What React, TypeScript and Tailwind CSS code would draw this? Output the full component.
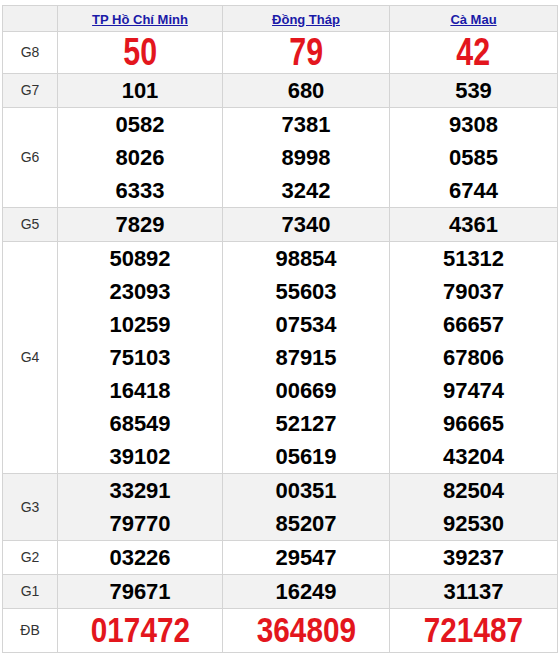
import React from 'react';

type Row = {
  label: string;
  values: string[][];
  shaded?: boolean;
  kind?: 'big' | 'special';
};

const provinces = ['TP Hồ Chí Minh', 'Đồng Tháp', 'Cà Mau'];

const rows: Row[] = [
  { label: 'G8', values: [['50'], ['79'], ['42']], kind: 'big' },
  { label: 'G7', values: [['101'], ['680'], ['539']], shaded: true },
  {
    label: 'G6',
    values: [
      ['0582', '8026', '6333'],
      ['7381', '8998', '3242'],
      ['9308', '0585', '6744'],
    ],
  },
  { label: 'G5', values: [['7829'], ['7340'], ['4361']], shaded: true },
  {
    label: 'G4',
    values: [
      ['50892', '23093', '10259', '75103', '16418', '68549', '39102'],
      ['98854', '55603', '07534', '87915', '00669', '52127', '05619'],
      ['51312', '79037', '66657', '67806', '97474', '96665', '43204'],
    ],
  },
  {
    label: 'G3',
    values: [
      ['33291', '79770'],
      ['00351', '85207'],
      ['82504', '92530'],
    ],
    shaded: true,
  },
  { label: 'G2', values: [['03226'], ['29547'], ['39237']] },
  { label: 'G1', values: [['79671'], ['16249'], ['31137']], shaded: true },
  { label: 'ĐB', values: [['017472'], ['364809'], ['721487']], kind: 'special' },
];

function NumberCell({ nums, kind }: { nums: string[]; kind?: Row['kind'] }) {
  if (kind === 'big') {
    return (
      <div className="h-[41px] flex items-center justify-center">
        <span className="inline-block scale-x-[0.8] text-[38px] font-bold text-[#e3161d]">{nums[0]}</span>
      </div>
    );
  }
  if (kind === 'special') {
    return (
      <div className="h-[43px] flex items-center justify-center">
        <span className="inline-block scale-x-[0.85] text-[35px] font-bold text-[#e3161d]">{nums[0]}</span>
      </div>
    );
  }
  return (
    <div className="flex flex-col items-center">
      {nums.map((n) => (
        <div key={n} className="leading-[33px] text-[22px] font-bold text-black">
          {n}
        </div>
      ))}
    </div>
  );
}

export default function App() {
  return (
    <div className="bg-white w-[560px] h-[653px] pl-[2px] pt-[5px] font-['Liberation_Sans',Arial,sans-serif]">
      <table className="w-[555px] border-collapse table-fixed">
        <colgroup>
          <col className="w-[55px]" />
          <col className="w-[165px]" />
          <col className="w-[167px]" />
          <col className="w-[168px]" />
        </colgroup>
        <thead>
          <tr className="bg-[#f1f1f1] h-[26px]">
            <th className="border border-[#d4d4d4]" />
            {provinces.map((p) => (
              <th key={p} className="border border-[#d4d4d4] text-center align-middle p-0">
                <a href="#" className="text-[13px] font-bold text-[#1a1aa8] underline">
                  {p}
                </a>
              </th>
            ))}
          </tr>
        </thead>
        <tbody>
          {rows.map((r) => (
            <tr key={r.label} className={r.shaded ? 'bg-[#f2f2f2]' : 'bg-white'}>
              <td className="border border-[#d4d4d4] text-center align-middle text-[14px] text-[#333] p-0">
                {r.label}
              </td>
              {r.values.map((v, i) => (
                <td key={i} className="border border-[#d4d4d4] text-center align-middle p-0">
                  <NumberCell nums={v} kind={r.kind} />
                </td>
              ))}
            </tr>
          ))}
        </tbody>
      </table>
    </div>
  );
}
